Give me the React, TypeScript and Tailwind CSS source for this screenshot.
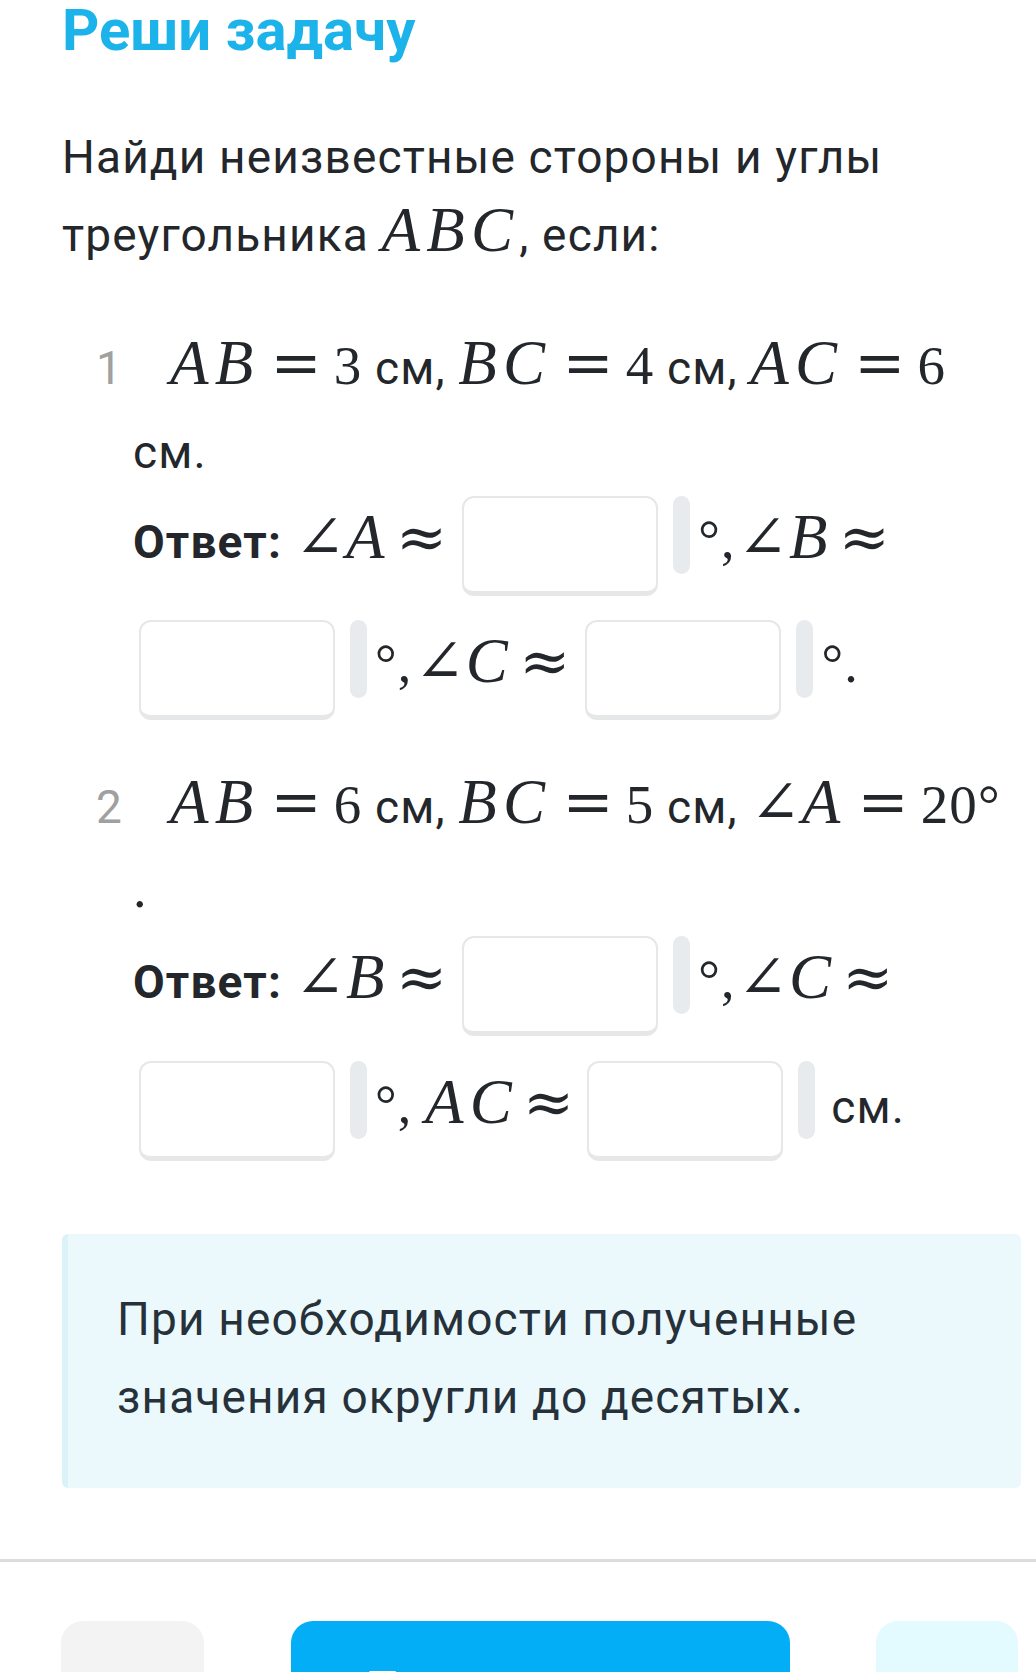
import type { ReactNode } from "react";

const serif = "font-['Liberation_Serif',serif]";
const sym = "font-['DejaVu_Serif','DejaVu_Sans',serif]";

function V({ children }: { children: ReactNode }) {
  return <span className={`${serif} italic text-[63px] leading-none tracking-[0.1em]`}>{children}</span>;
}

function N({ children }: { children: ReactNode }) {
  return <span className={`${serif} text-[55px] leading-none`}>{children}</span>;
}

function Op({ children, cls = "mx-[11px]" }: { children: ReactNode; cls?: string }) {
  return <span className={`${sym} text-[61px] leading-none ${cls}`}>{children}</span>;
}

function Ang({ cls = "" }: { cls?: string }) {
  return <span className={`${sym} text-[60px] leading-none ${cls}`}>∠</span>;
}

function Deg() {
  return <span className={`${serif} text-[54px] leading-none ml-[8px]`}>°</span>;
}

function Comma() {
  return <span className={`${serif} text-[54px] leading-none`}>,</span>;
}

function Slot({ cls = "" }: { cls?: string }) {
  return (
    <span className={`inline-flex items-start gap-[15px] align-middle ${cls}`}>
      <span className="block h-[100px] w-[196px] rounded-[12px] border-2 border-b-[5px] border-[#e6e7e8] bg-white" />
      <span className="block h-[78px] w-[17px] rounded-full bg-[#e8ebee]" />
    </span>
  );
}

function Num({ n }: { n: string }) {
  return <span className="inline-block w-[74px] tracking-normal text-[#a0a0a0]">{n}</span>;
}

export default function App() {
  return (
    <div className="h-[1672px] overflow-hidden bg-white font-['Roboto',sans-serif] text-[#23272b]">
      <div className="pl-[62px] pr-[15px]">
        <h1 className="text-[58px] font-bold leading-[60px] text-[#1cb3ea]">Реши задачу</h1>

        <div className="mt-[58px] text-[46px] leading-[78px] tracking-[0.025em]">
          <div>Найди неизвестные стороны и углы</div>
          <div>
            треугольника <V>ABC</V>, если:
          </div>
        </div>

        {/* task 1 */}
        <div className="mt-[52px] whitespace-nowrap pl-[71px] text-[46px] leading-[84px] tracking-[0.025em]">
          <div className="-ml-[37px] h-[84px]">
            <Num n="1" />
            <V>AB</V>
            <Op>=</Op>
            <N>3</N> см, <V>BC</V>
            <Op>=</Op>
            <N>4</N> см, <V>AC</V>
            <Op>=</Op>
            <N>6</N>
          </div>
          <div className="h-[84px]">см.</div>
          <div className="mt-[2px]">
            <span className="font-bold">Ответ:</span> <Ang />
            <V>A</V>
            <Op cls="ml-[5px] mr-[14px]">≈</Op>
            <Slot />
            <Deg />
            <Comma />
            <Ang cls="ml-[2px]" />
            <V>B</V>
            <Op cls="ml-[5px]">≈</Op>
          </div>
          <div className="mt-[24px]">
            <Slot cls="ml-[6px]" />
            <Deg />
            <Comma />
            <Ang cls="ml-[2px]" />
            <V>C</V>
            <Op cls="ml-[5px] mr-[14px]">≈</Op>
            <Slot />
            <Deg />
            <span className={`${serif} text-[54px] leading-none`}>.</span>
          </div>
        </div>

        {/* task 2 */}
        <div className="mt-[45px] whitespace-nowrap pl-[71px] text-[46px] leading-[84px] tracking-[0.025em]">
          <div className="-ml-[37px] h-[84px]">
            <Num n="2" />
            <V>AB</V>
            <Op>=</Op>
            <N>6</N> см, <V>BC</V>
            <Op>=</Op>
            <N>5</N> см, <Ang />
            <V>A</V>
            <Op>=</Op>
            <N>20</N>
            <span className={`${serif} text-[54px] leading-none`}>°</span>
          </div>
          <div className="h-[84px]">
            <span className={`${serif} text-[54px] leading-none`}>.</span>
          </div>
          <div className="mt-[3px]">
            <span className="font-bold">Ответ:</span> <Ang />
            <V>B</V>
            <Op cls="ml-[5px] mr-[14px]">≈</Op>
            <Slot />
            <Deg />
            <Comma />
            <Ang cls="ml-[2px]" />
            <V>C</V>
            <Op cls="ml-[5px]">≈</Op>
          </div>
          <div className="mt-[25px]">
            <Slot cls="ml-[6px]" />
            <Deg />
            <Comma /> <V>AC</V>
            <Op cls="ml-[5px] mr-[12px]">≈</Op>
            <Slot />
            <span className="ml-[16px]">см.</span>
          </div>
        </div>

        <div className="mt-[73px] rounded-[6px] border-l-[6px] border-[#dcf2f9] bg-[#ebf9fd] pb-[52px] pl-[49px] pr-[20px] pt-[46px] text-[46px] leading-[78px] tracking-[0.025em] text-[#26313a]">
          <div>При необходимости полученные</div>
          <div>значения округли до десятых.</div>
        </div>
      </div>

      <div className="mt-[71px] h-[3px] bg-[#dcdcdc]" />

      <div className="mt-[59px] flex justify-between pl-[61px] pr-[18px]">
        <div className="h-[150px] w-[143px] rounded-[22px] bg-[#f3f3f3]" />
        <div className="h-[150px] w-[499px] rounded-[22px] bg-[#03aef7] pl-[76px] pt-[44px] text-[45px] font-bold leading-none text-white">
          Проверить
        </div>
        <div className="h-[150px] w-[142px] rounded-[22px] bg-[#e3fafe]" />
      </div>
    </div>
  );
}
